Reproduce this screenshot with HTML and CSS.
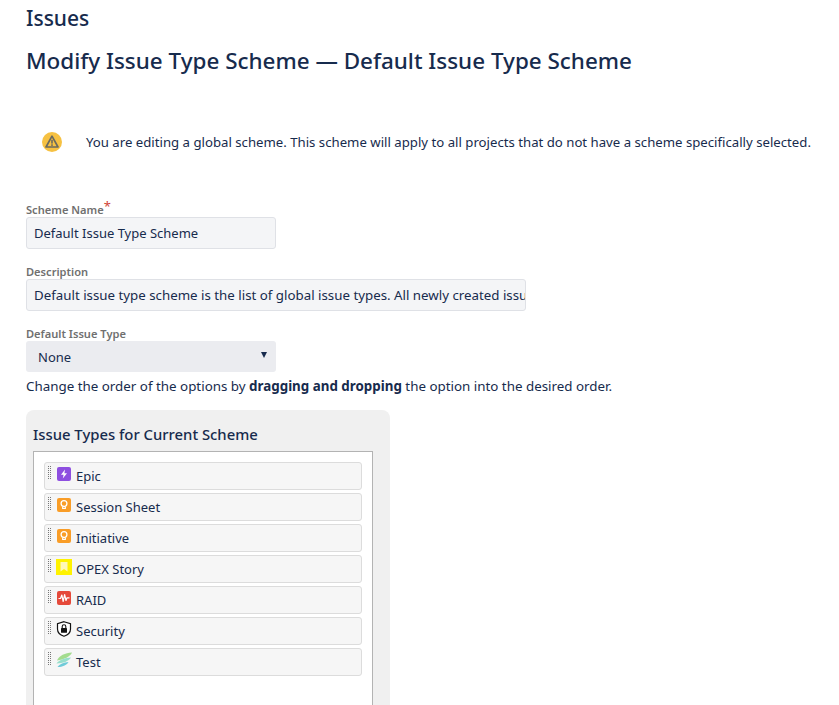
FILE: index.html
```html
<!DOCTYPE html>
<html lang="en">
<head>
<meta charset="utf-8">
<title>Modify Issue Type Scheme</title>
<link rel="stylesheet" href="styles.css">
</head>
<body>
<main class="page">
  <h1 class="page-title">Issues</h1>
  <h2 class="sub-title">Modify Issue Type Scheme — Default Issue Type Scheme</h2>
  <div class="notice">
    <svg class="notice-icon" viewBox="0 0 20 20" width="20" height="20" aria-hidden="true">
      <circle cx="10" cy="10" r="10" fill="#f6c142"/>
      <path d="M10 4.2 L16 15 H4 Z" fill="none" stroke="#6b6a5e" stroke-width="1.7" stroke-linejoin="round"/>
      <rect x="9.2" y="7.8" width="1.6" height="3.8" fill="#6b6a5e"/>
      <rect x="9.2" y="12.3" width="1.6" height="1.6" fill="#6b6a5e"/>
    </svg>
    <p class="notice-text">You are editing a global scheme. This scheme will apply to all projects that do not have a scheme specifically selected.</p>
  </div>
  <form class="form">
    <div class="field">
      <label class="label">Scheme Name<span class="req">*</span></label>
      <div class="input input-short">Default Issue Type Scheme</div>
    </div>
    <div class="field">
      <label class="label">Description</label>
      <div class="input input-long">Default issue type scheme is the list of global issue types. All newly created issues will use this scheme</div>
    </div>
    <div class="field">
      <label class="label">Default Issue Type</label>
      <div class="select"><span>None</span><span class="caret"></span></div>
    </div>
    <p class="hint">Change the order of the options by <strong>dragging and dropping</strong> the option into the desired order.</p>
  </form>
  <section class="panel">
    <h3 class="panel-title">Issue Types for Current Scheme</h3>
    <ul class="list">
      <li class="row"><span class="grip"></span>
        <svg class="ti" viewBox="0 0 14 14"><rect width="14" height="14" rx="2" fill="#8e4fe0"/><path d="M8 2.5 L4 7.8 H6.6 L5.8 11.5 L10 6.2 H7.4 Z" fill="#fff"/></svg>
        <span>Epic</span></li>
      <li class="row"><span class="grip"></span>
        <svg class="ti" viewBox="0 0 14 14"><rect width="14" height="14" rx="2" fill="#f99d27"/><circle cx="7" cy="5.6" r="2.9" fill="none" stroke="#fff" stroke-width="1.3"/><path d="M5.7 8.5 V10.5 H8.3 V8.5" fill="none" stroke="#fff" stroke-width="1.2"/></svg>
        <span>Session Sheet</span></li>
      <li class="row"><span class="grip"></span>
        <svg class="ti" viewBox="0 0 14 14"><rect width="14" height="14" rx="2" fill="#f99d27"/><circle cx="7" cy="5.6" r="2.9" fill="none" stroke="#fff" stroke-width="1.3"/><path d="M5.7 8.5 V10.5 H8.3 V8.5" fill="none" stroke="#fff" stroke-width="1.2"/></svg>
        <span>Initiative</span></li>
      <li class="row"><span class="grip"></span>
        <svg class="ti ti-wide" viewBox="0 0 16 16"><rect width="16" height="16" fill="#fff200"/><path d="M4.5 3 H11.5 V12.5 L8 10 L4.5 12.5 Z" fill="#fff8b8"/></svg>
        <span>OPEX Story</span></li>
      <li class="row"><span class="grip"></span>
        <svg class="ti" viewBox="0 0 14 14"><rect width="14" height="14" rx="2" fill="#e5493a"/><path d="M1.5 7.5 H3.5 L4.8 4 L6.2 10.5 L7.6 3.5 L9 9.5 L10 6.8 H12.5" fill="none" stroke="#fff" stroke-width="1.2" stroke-linejoin="round"/></svg>
        <span>RAID</span></li>
      <li class="row"><span class="grip"></span>
        <svg class="ti ti-wide" viewBox="0 0 16 16"><path d="M8 .7 L14.5 2.8 V8 C14.5 11.5 11.5 14.2 8 15.3 C4.5 14.2 1.5 11.5 1.5 8 V2.8 Z" fill="#fff" stroke="#111" stroke-width="1.2"/><rect x="5" y="7" width="6" height="4.8" rx=".6" fill="#111"/><path d="M6.2 7 V5.6 A1.8 1.8 0 0 1 9.8 5.6 V7" fill="none" stroke="#111" stroke-width="1.1"/></svg>
        <span>Security</span></li>
      <li class="row"><span class="grip"></span>
        <svg class="ti ti-wide" viewBox="0 0 16 16"><path d="M1 8.5 C3 3.5 9 1 16 .5 C14.5 4.5 8 7.5 1 8.5 Z" fill="#a3dc8e"/><path d="M.5 11.5 C3.5 7.5 9 6 15 5.5 C12.5 9.5 7 11.2 .5 11.5 Z" fill="#97dfcb"/><path d="M1.5 15 C3.5 12 8 10.5 12.5 10 C10.5 13.5 5.5 15.2 1.5 15 Z" fill="#6fcad8"/></svg>
        <span>Test</span></li>
    </ul>
  </section>
</main>
</body>
</html>
```
FILE: styles.css
```css
html, body {
  margin: 0;
  height: 705px;
  overflow: hidden;
  background: #fff;
}
body {
  font-family: "Noto Sans", "Open Sans", sans-serif;
  font-size: 13px;
  color: #172b4d;
}
.page {
  padding: 6px 0 0 26px;
  height: 699px;
  overflow: hidden;
}
.page-title {
  margin: 0;
  font-size: 21px;
  line-height: 24px;
  font-weight: 500;
}
.sub-title {
  margin: 15px 0 0;
  font-size: 22.45px;
  line-height: 32px;
  font-weight: 500;
}
.notice {
  display: flex;
  align-items: center;
  margin-top: 53px;
  padding-left: 16px;
  height: 24px;
}
.notice-icon {
  flex: none;
}
.notice-text {
  margin: 0 0 0 24px;
  white-space: nowrap;
  line-height: 20px;
  font-size: 13.2px;
}
.form {
  margin-top: 48px;
}
.field {
  margin-bottom: 16px;
}
.label {
  display: block;
  font-size: 11.1px;
  line-height: 14px;
  font-weight: 600;
  color: #707070;
}
.req {
  color: #d04437;
  font-size: 13px;
  font-weight: 400;
  position: relative;
  top: -3px;
}
.input {
  box-sizing: border-box;
  height: 32px;
  padding: 0 7px;
  line-height: 30px;
  background: #f4f5f7;
  border: 1px solid #dfe1e6;
  border-radius: 3px;
  white-space: nowrap;
  overflow: hidden;
}
.input-short { width: 250px; }
.input-long { width: 500px; font-size: 13.3px; }
.select {
  box-sizing: border-box;
  width: 250px;
  height: 31px;
  padding: 0 8px 0 12px;
  display: flex;
  align-items: center;
  justify-content: space-between;
  background: #ebecf0;
  border-radius: 3px;
}
.caret {
  width: 0;
  height: 0;
  border-left: 3px solid transparent;
  border-right: 3px solid transparent;
  border-top: 6px solid #172b4d;
  margin: -3px 1px 0 0;
}
.hint {
  margin: -12px 0 0;
  line-height: 20px;
  font-size: 13.36px;
}
.panel {
  box-sizing: border-box;
  width: 364px;
  height: 340px;
  margin-top: 14px;
  padding: 14px 17px 0 7px;
  background: #f0f0f0;
  border-radius: 8px;
}
.panel-title {
  margin: 0 0 7px;
  font-size: 14.85px;
  line-height: 20px;
  font-weight: 500;
}
.list {
  box-sizing: border-box;
  list-style: none;
  margin: 0;
  height: 300px;
  padding: 10px 10px 0;
  background: #fff;
  border: 1px solid #b3b3b3;
}
.row {
  box-sizing: border-box;
  display: flex;
  align-items: center;
  height: 28px;
  margin-bottom: 3px;
  padding-left: 2px;
  background: #f6f6f6;
  border: 1px solid #dcdcdc;
  border-radius: 3px;
}
.grip {
  flex: none;
  align-self: flex-start;
  width: 4px;
  height: 14px;
  margin: 3px 5px 0 0;
  background-image: conic-gradient(#777 0 25%, transparent 0);
  background-size: 2px 2px;
}
.ti {
  flex: none;
  align-self: flex-start;
  width: 14px;
  height: 14px;
  margin: 4px 5px 0 1px;
}
.ti-wide {
  width: 16px;
  height: 16px;
  margin: 3px 4px 0 0;
}
```
